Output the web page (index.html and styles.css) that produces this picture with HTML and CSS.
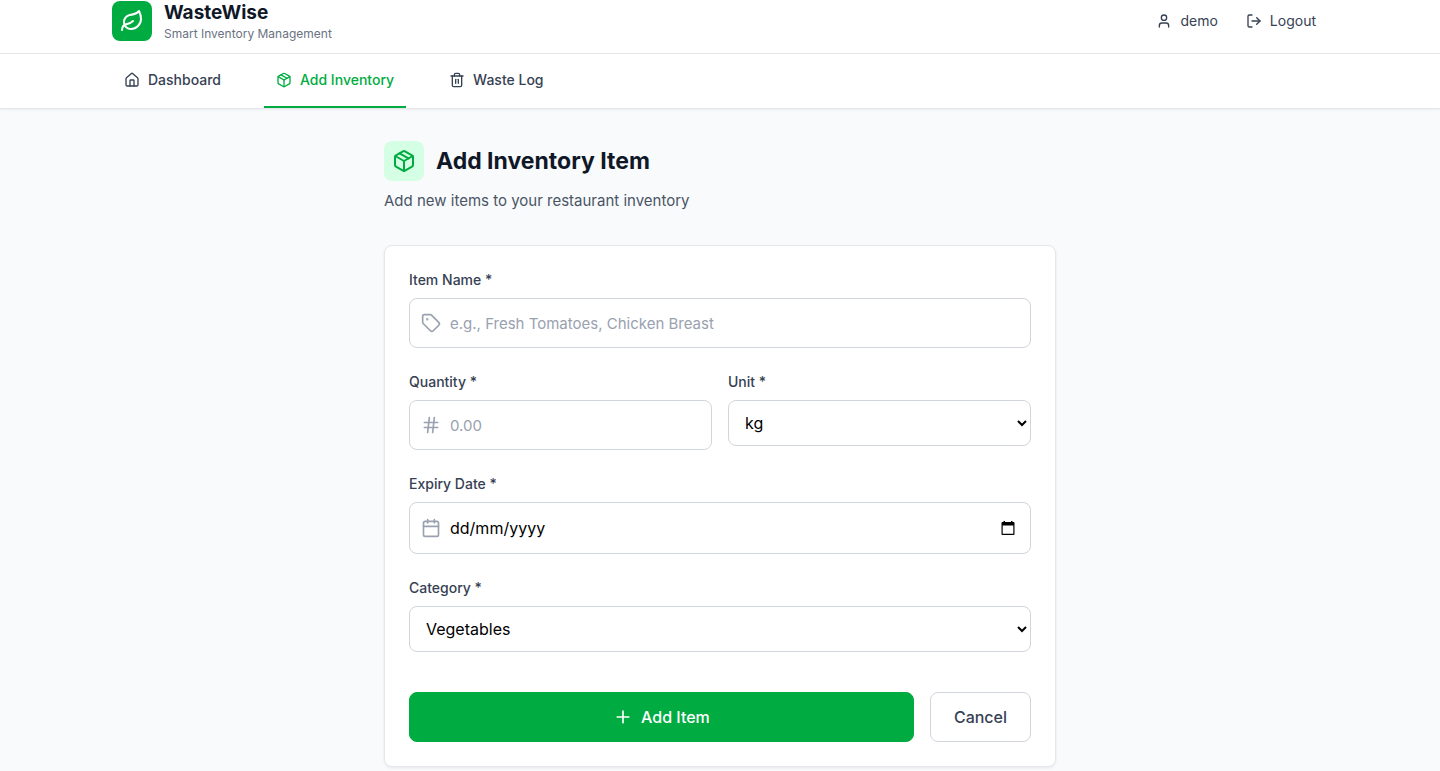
FILE: index.html
```html
<!DOCTYPE html>
<html lang="en-GB">
<head>
  <meta charset="utf-8">
  <meta name="viewport" content="width=device-width, initial-scale=1">
  <title>WasteWise</title>
  <link rel="stylesheet" href="styles.css">
</head>
<body>
  <svg class="sprite" aria-hidden="true">
    <symbol id="leaf" viewBox="0 0 24 24"><path d="M11 20A7 7 0 0 1 9.8 6.1C15.5 5 17 4.48 19 2c1 2 2 4.18 2 8 0 5.5-4.78 10-10 10Z"/><path d="M2 21c0-3 1.85-5.36 5.08-6C9.5 14.52 12 13 13 12"/></symbol>
    <symbol id="user" viewBox="0 0 24 24"><path d="M19 21v-2a4 4 0 0 0-4-4H9a4 4 0 0 0-4 4v2"/><circle cx="12" cy="7" r="4"/></symbol>
    <symbol id="logout" viewBox="0 0 24 24"><path d="m16 17 5-5-5-5"/><path d="M21 12H9"/><path d="M9 21H5a2 2 0 0 1-2-2V5a2 2 0 0 1 2-2h4"/></symbol>
    <symbol id="house" viewBox="0 0 24 24"><path d="M15 21v-8a1 1 0 0 0-1-1h-4a1 1 0 0 0-1 1v8"/><path d="M3 10a2 2 0 0 1 .709-1.528l7-5.999a2 2 0 0 1 2.582 0l7 5.999A2 2 0 0 1 21 10v9a2 2 0 0 1-2 2H5a2 2 0 0 1-2-2z"/></symbol>
    <symbol id="package" viewBox="0 0 24 24"><path d="M11 21.73a2 2 0 0 0 2 0l7-4A2 2 0 0 0 21 16V8a2 2 0 0 0-1-1.73l-7-4a2 2 0 0 0-2 0l-7 4A2 2 0 0 0 3 8v8a2 2 0 0 0 1 1.73z"/><path d="M12 22V12"/><path d="M3.29 7 12 12l8.71-5"/><path d="m7.5 4.27 9 5.15"/></symbol>
    <symbol id="trash" viewBox="0 0 24 24"><path d="M3 6h18"/><path d="M19 6v14a2 2 0 0 1-2 2H7a2 2 0 0 1-2-2V6"/><path d="M8 6V4a2 2 0 0 1 2-2h4a2 2 0 0 1 2 2v2"/><path d="M10 11v6"/><path d="M14 11v6"/></symbol>
    <symbol id="tag" viewBox="0 0 24 24"><path d="M12.586 2.586A2 2 0 0 0 11.172 2H4a2 2 0 0 0-2 2v7.172a2 2 0 0 0 .586 1.414l8.704 8.704a2.426 2.426 0 0 0 3.42 0l6.58-6.58a2.426 2.426 0 0 0 0-3.42z"/><circle cx="7.5" cy="7.5" r=".5" fill="currentColor"/></symbol>
    <symbol id="hash" viewBox="0 0 24 24"><path d="M4 9h16M4 15h16M10 3 8 21M16 3l-2 18"/></symbol>
    <symbol id="calendar" viewBox="0 0 24 24"><path d="M8 2v4M16 2v4"/><rect width="18" height="18" x="3" y="4" rx="2"/><path d="M3 10h18"/></symbol>
    <symbol id="plus" viewBox="0 0 24 24"><path d="M5 12h14M12 5v14"/></symbol>
  </svg>

  <header class="header">
    <div class="container header-row">
      <div class="brand">
        <span class="brand-mark"><svg class="icon icon-lg"><use href="#leaf"/></svg></span>
        <div>
          <div class="brand-name">WasteWise</div>
          <div class="brand-tagline">Smart Inventory Management</div>
        </div>
      </div>
      <div class="account">
        <span class="account-user"><svg class="icon"><use href="#user"/></svg>demo</span>
        <button class="logout" type="button"><svg class="icon"><use href="#logout"/></svg>Logout</button>
      </div>
    </div>
  </header>

  <nav class="nav">
    <div class="container nav-row">
      <a class="nav-link" href="#dashboard"><svg class="icon"><use href="#house"/></svg>Dashboard</a>
      <a class="nav-link nav-link-active" href="#add"><svg class="icon"><use href="#package"/></svg>Add Inventory</a>
      <a class="nav-link" href="#waste"><svg class="icon"><use href="#trash"/></svg>Waste Log</a>
    </div>
  </nav>

  <main class="main">
    <div class="page-head">
      <span class="page-mark"><svg class="icon icon-lg"><use href="#package"/></svg></span>
      <h1 class="page-title">Add Inventory Item</h1>
    </div>
    <p class="page-subtitle">Add new items to your restaurant inventory</p>

    <form class="card">
      <div class="field">
        <label class="label" for="name">Item Name *</label>
        <div class="control">
          <svg class="icon icon-md control-icon"><use href="#tag"/></svg>
          <input class="input" id="name" type="text" placeholder="e.g., Fresh Tomatoes, Chicken Breast">
        </div>
      </div>
      <div class="field-pair">
        <div class="field">
          <label class="label" for="quantity">Quantity *</label>
          <div class="control">
            <svg class="icon icon-md control-icon"><use href="#hash"/></svg>
            <input class="input" id="quantity" type="text" inputmode="decimal" placeholder="0.00">
          </div>
        </div>
        <div class="field">
          <label class="label" for="unit">Unit *</label>
          <select class="select" id="unit"><option>kg</option><option>g</option><option>liters</option><option>pieces</option></select>
        </div>
      </div>
      <div class="field">
        <label class="label" for="expiry">Expiry Date *</label>
        <div class="control">
          <svg class="icon icon-md control-icon"><use href="#calendar"/></svg>
          <input class="input input-date" id="expiry" type="text" placeholder="dd/mm/yyyy">
          <button class="date-button" type="button" aria-label="Open calendar">
            <svg class="date-glyph" viewBox="0 0 16 16"><path fill-rule="evenodd" d="M3.500 1H5v1h6V1h1.500v1H13.500a1 1 0 0 1 1 1v11a1 1 0 0 1-1 1h-11a1 1 0 0 1-1-1V3a1 1 0 0 1 1-1H3.500ZM2.700 5.500v8.300h10.600V5.500Z"/></svg>
          </button>
        </div>
      </div>
      <div class="field">
        <label class="label" for="category">Category *</label>
        <select class="select" id="category"><option>Vegetables</option><option>Fruits</option><option>Meat</option><option>Dairy</option></select>
      </div>
      <div class="actions">
        <button class="button button-primary" type="submit"><svg class="icon icon-md"><use href="#plus"/></svg>Add Item</button>
        <button class="button button-outline" type="button">Cancel</button>
      </div>
    </form>
  </main>
</body>
</html>
```
FILE: styles.css
```css
*, *::before, *::after { box-sizing: border-box; }

body {
  margin: 0;
  background: #f9fafc;
  color: #101828;
  font-family: Inter, "Liberation Sans", sans-serif;
  font-size: 16px;
  line-height: 24px;
}

button, input, select { font: inherit; color: inherit; }
button { cursor: pointer; }

.sprite { display: none; }

.icon {
  width: 16px;
  height: 16px;
  flex: none;
  fill: none;
  stroke: currentColor;
  stroke-width: 2;
  stroke-linecap: round;
  stroke-linejoin: round;
}
.icon-md { width: 20px; height: 20px; }
.icon-lg { width: 24px; height: 24px; }

.container { max-width: 1280px; margin: 0 auto; padding: 0 32px; }

.header { background: #fff; border-bottom: 1px solid #e5e7eb; }
.header-row {
  display: flex;
  align-items: center;
  justify-content: space-between;
  padding-bottom: 11px;
}
.brand { display: flex; align-items: center; gap: 12px; }
.brand-mark, .page-mark {
  display: grid;
  place-items: center;
  width: 40px;
  height: 40px;
  border-radius: 8px;
}
.brand-mark { background: #00ac41; color: #fff; }
.brand-name { font-size: 19px; line-height: 26px; font-weight: 700; }
.brand-tagline { font-size: 12px; line-height: 16px; color: #6a7282; }

.account {
  display: flex;
  align-items: center;
  gap: 16px;
  font-size: 14px;
  line-height: 20px;
  color: #364153;
}
.account-user, .logout { display: flex; align-items: center; gap: 8px; }
.logout { padding: 8px 12px; border: 0; background: none; }

.nav {
  background: #fff;
  border-bottom: 1px solid #e5e7eb;
  box-shadow: 0 1px 2px rgba(0, 0, 0, 0.06);
}
.nav-row { display: flex; gap: 31px; }
.nav-link {
  display: flex;
  align-items: center;
  gap: 8px;
  padding: 16px 12px;
  border-bottom: 2px solid transparent;
  color: #364153;
  font-size: 14px;
  line-height: 20px;
  font-weight: 500;
  text-decoration: none;
}
.nav-link-active { border-color: #00ac41; color: #00ac41; }

.main { max-width: 672px; margin: 0 auto; padding: 32px 0 4px; }
.page-head { display: flex; align-items: center; gap: 12px; }
.page-mark { background: #d5ffe4; color: #00ac41; }
.page-title { margin: 0; font-size: 23px; line-height: 32px; font-weight: 700; }
.page-subtitle { margin: 8px 0 32px; color: #4a5565; font-size: 15px; }

.card {
  display: flex;
  flex-direction: column;
  gap: 24px;
  padding: 24px;
  background: #fff;
  border: 1px solid #e5e7eb;
  border-radius: 8px;
  box-shadow: 0 1px 3px rgba(0, 0, 0, 0.08);
}
.field { display: flex; flex-direction: column; gap: 8px; }
.field-pair {
  display: grid;
  grid-template-columns: 1fr 1fr;
  align-items: start;
  gap: 16px;
}
.label { color: #364153; font-size: 14px; line-height: 20px; font-weight: 500; }

.control {
  display: flex;
  align-items: center;
  gap: 9px;
  padding: 0 12px 0 11px;
  border: 1px solid #d1d5dc;
  border-radius: 8px;
}
.control:focus-within, .select:focus { border-color: #00ac41; }
.control-icon { color: #99a1af; }
.input {
  flex: 1;
  min-width: 0;
  height: 48px;
  padding: 0;
  border: 0;
  outline: 0;
  background: none;
}
.input::placeholder { color: #99a1af; opacity: 1; font-size: 15px; }
.input-date { height: 50px; }
.input-date::placeholder { color: #000; font-size: 16px; }
.date-button { display: flex; padding: 2px; border: 0; background: none; }
.date-glyph { width: 16px; height: 16px; fill: #000; }

.select {
  width: 100%;
  height: 46px;
  padding: 0 12px;
  border: 1px solid #d1d5dc;
  border-radius: 8px;
  background-color: #fff;
  color: #000;
}

.actions { display: flex; gap: 16px; padding-top: 16px; }
.button {
  display: flex;
  align-items: center;
  justify-content: center;
  gap: 8px;
  padding: 12px 23px;
  border: 1px solid transparent;
  border-radius: 8px;
  font-weight: 500;
}
.button-primary { flex: 1; background: #00ac41; border-color: #00ac41; color: #fff; }
.button-outline { background: #fff; border-color: #d1d5dc; color: #364153; }
```
